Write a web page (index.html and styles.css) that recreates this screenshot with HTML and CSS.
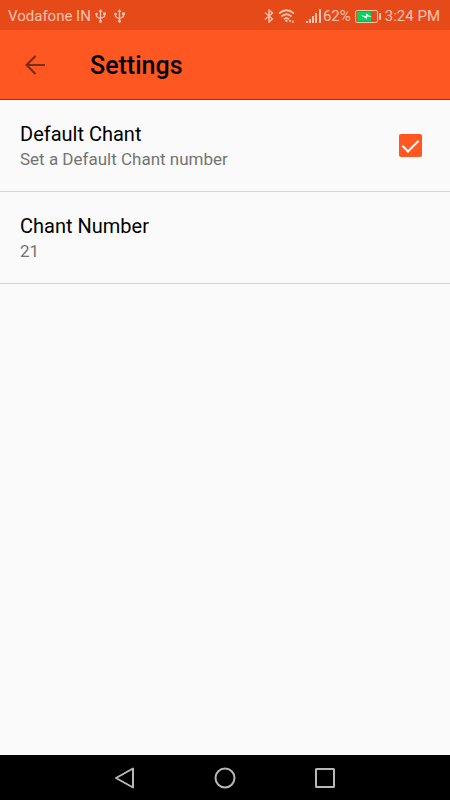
FILE: index.html
```html
<!DOCTYPE html>
<html lang="en">
<head>
    <meta charset="utf-8">
    <meta name="viewport" content="width=device-width, initial-scale=1">
    <title>Settings</title>
    <link rel="stylesheet" href="styles.css">
</head>
<body>
    <!-- Status Bar -->
    <div class="status-bar">
        <div class="status-left">
            <span>Vodafone IN</span>
            <svg class="usb" width="11" height="14" viewBox="0 0 11 14"><path d="M5.5 2v10M1.5 5v2.5l4 2.5M9.5 4.500v3l-4 2" fill="none" stroke="currentColor" stroke-width="1.3"/><path d="M5.5 0l2 3h-4zM8 3.5h3v2.500h-3z" fill="currentColor"/><circle cx="1.5" cy="5" r="1.3" fill="currentColor"/><circle cx="5.5" cy="12.3" r="1.5" fill="currentColor"/></svg>
            <svg class="usb" width="11" height="14" viewBox="0 0 11 14"><path d="M5.5 2v10M1.5 5v2.5l4 2.5M9.5 4.500v3l-4 2" fill="none" stroke="currentColor" stroke-width="1.3"/><path d="M5.5 0l2 3h-4zM8 3.5h3v2.500h-3z" fill="currentColor"/><circle cx="1.5" cy="5" r="1.3" fill="currentColor"/><circle cx="5.5" cy="12.3" r="1.5" fill="currentColor"/></svg>
        </div>
        <div class="status-right">
            <svg width="10" height="14" viewBox="0 0 10 14"><path d="M1 3.5l7.500 6.500-3.500 3V1l3.500 3-7.500 6.500" fill="none" stroke="currentColor" stroke-width="1.4"/></svg>
            <svg class="wifi" width="18" height="14" viewBox="0 0 18 14"><g fill="none" stroke="currentColor" stroke-width="1.7"><path d="M1 4.500q7.500-6.500 15 0M3.500 7.500q5-4.500 10 0M6 10.200q2.500-2 5 0"/></g><path d="M7 11.500l1.500-1 1.500 1-1.500 2zM10.500 11h3l-1.500 2.500zM13.500 13.500h3l-1.500-2.500z" fill="currentColor"/></svg>
            <svg class="signal" width="15" height="14" viewBox="0 0 15 14"><path d="M0 12h2v2H0zM3 10h2v4H3zM6 7h2v7H6zM9 4h2v10H9zM13 0h2v14h-2z" fill="currentColor"/></svg>
            <span>62%</span>
            <svg class="battery" width="26" height="13" viewBox="0 0 26 13"><rect x="2" y="2" width="14" height="9" fill="#00d65b"/><rect x=".5" y=".5" width="22" height="12" rx="1.5" fill="none" stroke="currentColor"/><path d="M24 3h2v7h-2z" fill="currentColor"/><path d="M6 5.500l5 .5V3.500l6 3.500-5-.5V9z" fill="#fff"/></svg>
            <span>3:24 PM</span>
        </div>
    </div>

    <!-- Header Section -->
    <header>
        <a href="#" class="back" aria-label="Back">
            <svg width="20" height="20" viewBox="0 0 20 20"><path d="M20 10H1.500M10.500 1L1.500 10l9 9" fill="none" stroke="currentColor" stroke-width="2.2"/></svg>
        </a>
        <h1>Settings</h1>
    </header>

    <!-- Settings List -->
    <main>
        <div class="setting">
            <label for="defaultChant">
                <span class="title">Default Chant</span>
                <span class="summary">Set a Default Chant number</span>
            </label>
            <input type="checkbox" id="defaultChant" checked>
        </div>
        <button type="button" class="setting">
            <span class="title">Chant Number</span>
            <span class="summary">21</span>
        </button>
    </main>

    <!-- System Navigation -->
    <nav>
        <button type="button" aria-label="Back">
            <svg width="22" height="22" viewBox="0 0 22 22"><path d="M19 1.500v19L2 11z"/></svg>
        </button>
        <button type="button" aria-label="Home">
            <svg width="22" height="22" viewBox="0 0 22 22"><circle cx="11" cy="11" r="9.5"/></svg>
        </button>
        <button type="button" aria-label="Recent apps">
            <svg width="22" height="22" viewBox="0 0 22 22"><rect x="2" y="2" width="18" height="18" rx=".5"/></svg>
        </button>
    </nav>
</body>
</html>
```

FILE: styles.css
```css
*, *::after {
    box-sizing: border-box;
}
body {
    font-family: Roboto, sans-serif;
    background-color: #fafafa;
    color: #000;
    margin: 0;
    min-height: 100vh;
    display: flex;
    flex-direction: column;
}
svg {
    display: block;
    flex: none;
}
button {
    font: inherit;
    color: inherit;
    background: none;
    border: none;
    padding: 0;
    cursor: pointer;
}
.status-bar {
    display: flex;
    justify-content: space-between;
    height: 30px;
    padding: 2px 10px 0 8px;
    background-color: #e64a19;
    color: #ffc4b0;
    font-size: 15px;
    line-height: 28px;
}
.status-left, .status-right {
    display: flex;
    align-items: center;
}
.usb {
    margin-left: 4px;
}
.usb + .usb {
    margin-left: 8px;
}
.wifi {
    margin-left: 4px;
}
.signal {
    margin: 0 2px 0 10px;
}
.battery {
    margin: 0 4px;
}
header {
    display: flex;
    align-items: center;
    height: 70px;
    padding: 0 25px;
    background-color: #ff5722;
    border-bottom: 1px solid #f01000;
}
.back {
    color: #7d2c13;
    margin-right: 45px;
}
h1 {
    margin: 0;
    padding-top: 2px;
    font-size: 25px;
    font-weight: 500;
    line-height: 30px;
}
main {
    flex: 1;
}
.setting {
    display: flex;
    align-items: center;
    justify-content: space-between;
    width: 100%;
    padding: 20px 28px 21px 20px;
    border-bottom: 1px solid #d5d5d5;
    text-align: left;
}
button.setting {
    display: block;
}
.title, .summary {
    display: block;
}
.title {
    font-size: 20px;
    line-height: 28px;
}
.summary {
    color: #737373;
    font-size: 17px;
    line-height: 22px;
}
input[type="checkbox"] {
    appearance: none;
    display: grid;
    justify-content: center;
    width: 23px;
    height: 23px;
    margin: 0;
    border: 2px solid #737373;
    border-radius: 2px;
}
input[type="checkbox"]:checked {
    background-color: #ff5722;
    border-color: #ff5722;
}
input[type="checkbox"]:checked::after {
    content: "";
    width: 9px;
    height: 16px;
    border: solid #fff;
    border-width: 0 2px 2px 0;
    transform: rotate(45deg);
}
nav {
    display: flex;
    justify-content: center;
    gap: 78px;
    height: 45px;
    background-color: #000;
}
nav svg {
    fill: none;
    stroke: #b8b8b8;
    stroke-width: 2;
    stroke-linejoin: round;
}
```
